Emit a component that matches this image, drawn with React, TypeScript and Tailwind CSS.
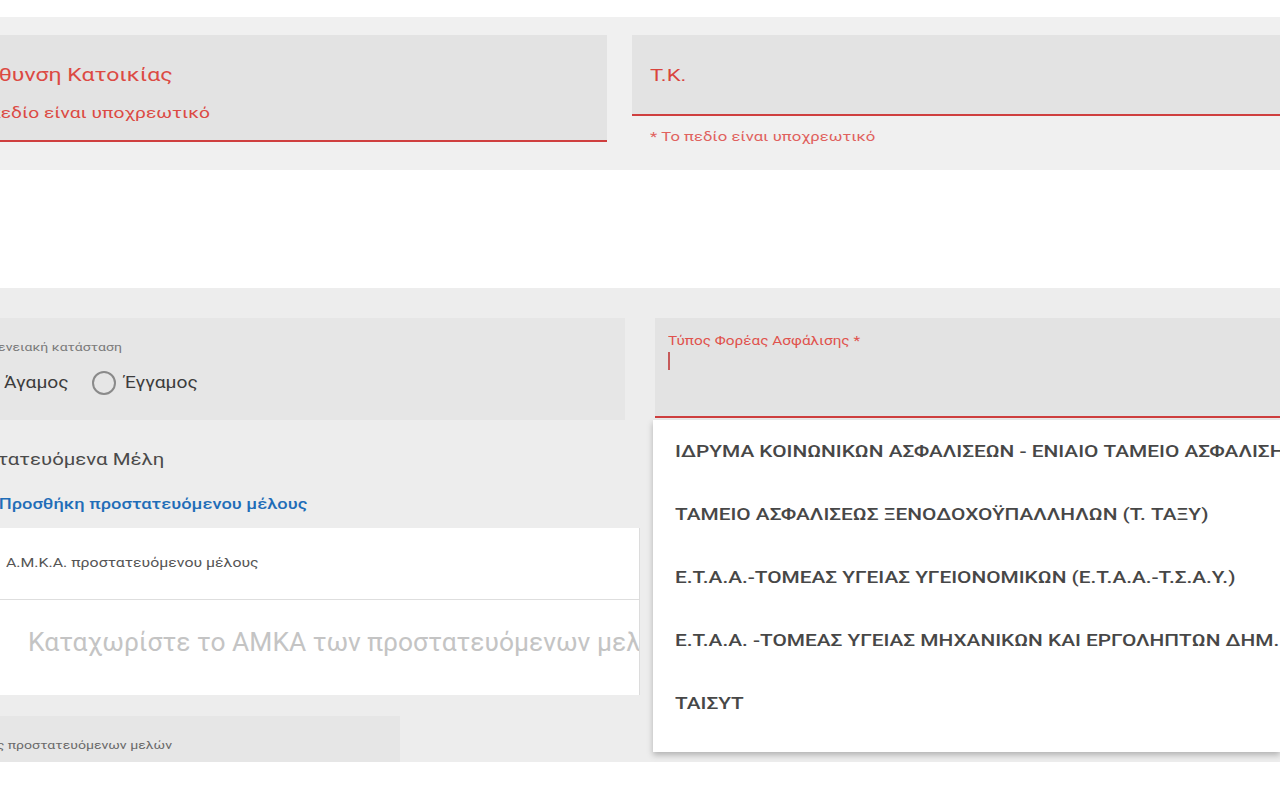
import { useState } from 'react';

const funds = [
  'ΙΔΡΥΜΑ ΚΟΙΝΩΝΙΚΩΝ ΑΣΦΑΛΙΣΕΩΝ - ΕΝΙΑΙΟ ΤΑΜΕΙΟ ΑΣΦΑΛΙΣΗΣ ΜΙΣΘΩΤΩΝ',
  'ΤΑΜΕΙΟ ΑΣΦΑΛΙΣΕΩΣ ΞΕΝΟΔΟΧΟΫΠΑΛΛΗΛΩΝ (Τ. ΤΑΞΥ)',
  'Ε.Τ.Α.Α.-ΤΟΜΕΑΣ ΥΓΕΙΑΣ ΥΓΕΙΟΝΟΜΙΚΩΝ (Ε.Τ.Α.Α.-Τ.Σ.Α.Υ.)',
  'Ε.Τ.Α.Α. -ΤΟΜΕΑΣ ΥΓΕΙΑΣ ΜΗΧΑΝΙΚΩΝ ΚΑΙ ΕΡΓΟΛΗΠΤΩΝ ΔΗΜ. ΕΡΓΩΝ',
  'ΤΑΙΣΥΤ',
];

// the screenshot is stretched sideways, so the text is widened to match
function Radio({ label, checked, width, onClick }: { label: string; checked: boolean; width: number; onClick: () => void }) {
  return (
    <label onClick={onClick} className="flex items-center cursor-pointer">
      <span className="w-[24px] h-[24px] shrink-0 rounded-full border-2 border-[#8a8a8a] flex items-center justify-center">
        {checked && <span className="w-[12px] h-[12px] rounded-full bg-[#8a8a8a]" />}
      </span>
      <span className="ml-[8px] whitespace-nowrap" style={{ width }}>
        <span className="inline-block origin-left [transform:scaleX(1.2)] text-[16px] text-[#3c3c3c]">{label}</span>
      </span>
    </label>
  );
}

export default function App() {
  const [status, setStatus] = useState<'single' | 'married' | null>(null);

  return (
    <div className="w-[1280px] h-[800px] overflow-hidden bg-white font-['Roboto','Noto_Sans',sans-serif]">
      {/* address row */}
      <div className="mt-[17px] h-[153px] bg-[#f0f0f0] pt-[18px] flex">
        <div className="ml-[-67px] w-[674px] h-[107px] bg-[#e3e3e3] border-b-2 border-[#cf3f3f] pl-[17px] pt-[28px] whitespace-nowrap">
          <div className="text-[18px] leading-[24px] text-[#dc4a43]">
            <span className="inline-block origin-left [transform:scaleX(1.28)]">Διεύθυνση Κατοικίας</span>
          </div>
          <div className="mt-[16px] text-[15px] leading-[20px] text-[#dc4a43]">
            <span className="inline-block origin-left [transform:scaleX(1.28)]">* Το πεδίο είναι υποχρεωτικό</span>
          </div>
        </div>
        <div className="ml-[25px] flex-1">
          <div className="h-[81px] bg-[#e3e3e3] border-b-2 border-[#cf3f3f] pl-[18px] pt-[29px]">
            <div className="text-[17px] leading-[22px] text-[#d9433d]">
              <span className="inline-block origin-left [transform:scaleX(1.3)]">Τ.Κ.</span>
            </div>
          </div>
          <div className="pl-[18px] mt-[12px] text-[13px] leading-[18px] text-[#e0625e]">
            <span className="inline-block origin-left [transform:scaleX(1.28)]">* Το πεδίο είναι υποχρεωτικό</span>
          </div>
        </div>
      </div>

      {/* family / insurance */}
      <div className="mt-[118px] h-[474px] bg-[#ededed] pt-[30px] flex">
        <div className="ml-[-55px] w-[695px] flex flex-col">
          <div className="w-[680px] h-[102px] bg-[#e6e6e6] pt-[22px] whitespace-nowrap">
            <div className="ml-[16px] text-[11px] leading-[16px] text-[#7a7a7a]">
              <span className="inline-block origin-left [transform:scaleX(1.28)]">Οικογενειακή κατάσταση</span>
            </div>
            <div className="ml-[27px] mt-[15px] flex items-center">
              <Radio label="Άγαμος" width={88} checked={status === 'single'} onClick={() => setStatus('single')} />
              <Radio label="Έγγαμος" width={90} checked={status === 'married'} onClick={() => setStatus('married')} />
            </div>
          </div>
          <div className="h-[108px] pt-[27px] whitespace-nowrap">
            <div className="ml-[3px] text-[17px] leading-[24px] text-[#4a4a4a]">
              <span className="inline-block origin-left [transform:scaleX(1.2)]">Προστατευόμενα Μέλη</span>
            </div>
            <div className="ml-[39px] mt-[23px] text-[15px] leading-[20px] font-medium text-[#1f6db8] cursor-pointer">
              <span className="inline-block origin-left [transform:scaleX(1.22)]">+ Προσθήκη προστατευόμενου μέλους</span>
            </div>
          </div>
          <div className="h-[167px] bg-white border-r border-[#dcdcdc]">
            <div className="h-[72px] border-b border-[#dedede] pl-[61px] pt-[26px] text-[13px] leading-[18px] text-[#555] whitespace-nowrap">
              <span className="inline-block origin-left [transform:scaleX(1.22)]">Α.Μ.Κ.Α. προστατευόμενου μέλους</span>
            </div>
            <div className="pl-[83px] pt-[26px] text-[26px] leading-[32px] text-[#c4c4c4] whitespace-nowrap overflow-hidden">
              <span className="inline-block origin-left [transform:scaleX(1.015)]">Καταχωρίστε το ΑΜΚΑ των προστατευόμενων μελών</span>
            </div>
          </div>
          <div className="pt-[21px]">
            <div className="w-[455px] h-[46px] bg-[#e6e6e6] pl-[6px] pt-[22px] text-[11px] leading-[16px] text-[#6a6a6a] whitespace-nowrap">
              <span className="inline-block origin-left [transform:scaleX(1.28)]">Αριθμός προστατευόμενων μελών</span>
            </div>
          </div>
        </div>

        <div className="ml-[15px] flex-1 relative">
          <div className="h-[100px] bg-[#e3e3e3] border-b-2 border-[#cf3f3f] pl-[13px] pt-[16px]">
            <div className="text-[12px] leading-[14px] text-[#e0524d] whitespace-nowrap">
              <span className="inline-block origin-left [transform:scaleX(1.28)]">Τύπος Φορέας Ασφάλισης *</span>
            </div>
            <div className="mt-[4px] w-[2px] h-[18px] bg-[#c65a5a]" />
          </div>
          <div className="absolute left-[-2px] right-0 top-[102px] bg-white shadow-[0_3px_6px_rgba(0,0,0,0.25)] pb-[17px]">
            {funds.map((f) => (
              <div key={f} className="h-[63px] flex items-center pl-[22px] whitespace-nowrap overflow-hidden text-[16px] font-medium text-[#474747] hover:bg-[#f5f5f5]">
                <span className="inline-block origin-left [transform:scaleX(1.3)]">{f}</span>
              </div>
            ))}
          </div>
        </div>
      </div>
    </div>
  );
}
